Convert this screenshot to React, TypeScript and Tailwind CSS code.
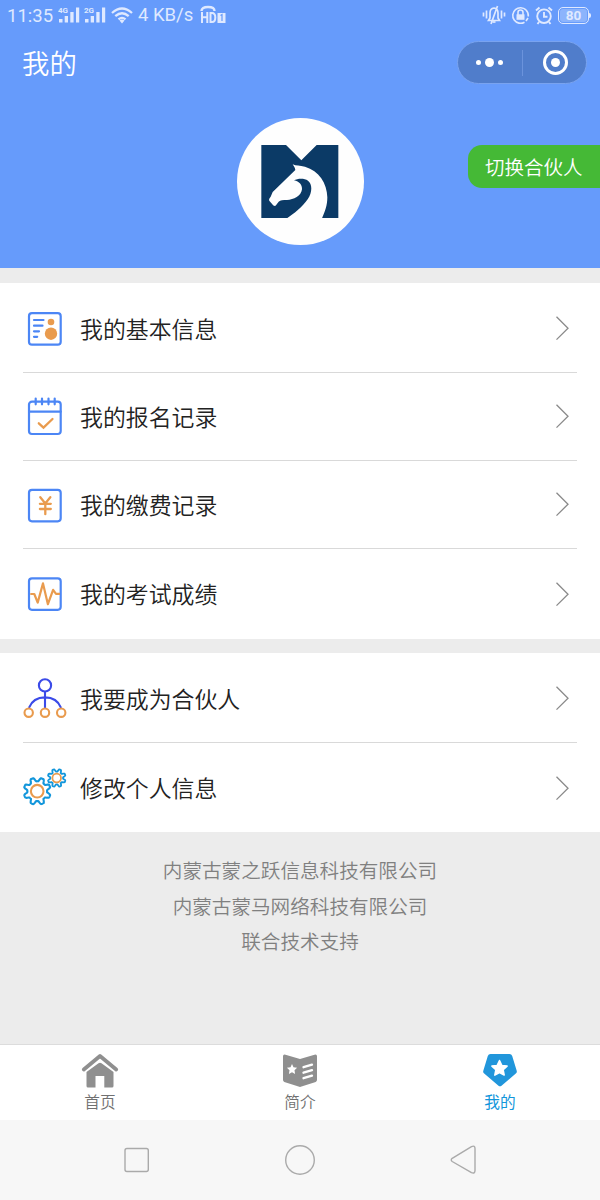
import React from 'react';

const BLUE = '#4c86f5';
const ORANGE = '#e99b4e';
const CYAN = '#1296db';

function gearPath(cx: number, cy: number, inner: number, outer: number, teeth: number, turn: number) {
  const points: string[] = [];
  const steps = teeth * 16;
  for (let i = 0; i < steps; i++) {
    const a = (i / steps) * Math.PI * 2;
    const wave = Math.max(-1, Math.min(1, Math.cos(a * teeth) * 1.7));
    const r = (inner + outer) / 2 + ((outer - inner) / 2) * wave;
    points.push(`${(cx + r * Math.cos(a + turn)).toFixed(2)} ${(cy + r * Math.sin(a + turn)).toFixed(2)}`);
  }
  return `M${points.join('L')}Z`;
}

function InfoIcon() {
  return (
    <svg className="w-11 h-11 shrink-0" viewBox="0 0 44 44" fill="none" stroke={BLUE} strokeWidth="2.2" strokeLinecap="round">
      <rect x="6" y="7.2" width="31.7" height="31.5" rx="3" />
      <path d="M11 14h9.5M11 19.7h8.5M11 25.3h5M11 30.8h3.2" />
      <circle cx="28" cy="16" r="3.3" fill={ORANGE} stroke="none" />
      <circle cx="28" cy="27.7" r="6.2" fill={ORANGE} stroke="none" />
    </svg>
  );
}

function CalendarIcon() {
  return (
    <svg className="w-11 h-11 shrink-0" viewBox="0 0 44 44" fill="none" stroke={BLUE} strokeWidth="2.2" strokeLinecap="round">
      <rect x="6" y="7.6" width="31.7" height="32.4" rx="3" />
      <path d="M6 17.7h31.7M12.7 4.6v5.7M19 4.6v5.7M25.5 4.6v5.7M31.7 4.6v5.7" />
      <path d="M15.8 29.3l4.7 4.3 9-8.6" stroke={ORANGE} strokeWidth="2.3" />
    </svg>
  );
}

function PayIcon() {
  return (
    <svg className="w-11 h-11 shrink-0" viewBox="0 0 44 44" fill="none" stroke={BLUE} strokeWidth="2.2" strokeLinecap="round">
      <rect x="6" y="7.8" width="31.7" height="31.5" rx="3" />
      <path d="M17.3 15.2l5 6.3 5-6.3M16.9 21.8h10.9M16.9 27h10.9M22.3 21.8v10.4" stroke={ORANGE} strokeWidth="2.3" />
    </svg>
  );
}

function ScoreIcon() {
  return (
    <svg className="w-11 h-11 shrink-0" viewBox="0 0 44 44" fill="none" stroke={BLUE} strokeWidth="2.2" strokeLinejoin="round">
      <rect x="6" y="6.3" width="31.7" height="31.5" rx="3" />
      <path d="M7.3 22h4l3.4 8.6L20 11.4l4.9 20.8 5.2-14.4 2.9 4h4" stroke={ORANGE} />
    </svg>
  );
}

function PartnerIcon() {
  return (
    <svg className="w-11 h-11 shrink-0" viewBox="0 0 44 44" fill="none" stroke="#3b4be8" strokeWidth="2.1">
      <circle cx="22" cy="9.4" r="6.1" />
      <path d="M22 15.6v16.6M5.9 31.8C8.5 25.5 14 21.4 22 21.4s13.5 4.1 16.1 10.4" />
      <g stroke={ORANGE}>
        <circle cx="5.7" cy="36.7" r="4.2" />
        <circle cx="22" cy="36.7" r="4.2" />
        <circle cx="38.2" cy="36.7" r="4.2" />
      </g>
    </svg>
  );
}

function GearsIcon() {
  return (
    <svg className="w-11 h-11 shrink-0 overflow-visible" viewBox="0 0 44 44" fill="none" stroke={CYAN} strokeWidth="2.1" strokeLinejoin="round">
      <path d={gearPath(14.2, 25.2, 9.9, 13.5, 8, 0.39)} />
      <circle cx="14.2" cy="25.2" r="6.3" stroke={ORANGE} />
      <path d={gearPath(33.7, 12, 6.4, 9, 8, 0.39)} strokeWidth="1.8" />
      <circle cx="33.7" cy="12" r="4.3" stroke={ORANGE} strokeWidth="1.8" />
    </svg>
  );
}

function Logo() {
  return (
    <svg className="w-[127px] h-[127px]" viewBox="36 24 381 381">
      <circle cx="226.5" cy="214.5" r="190.5" fill="#fefefe" />
      <path fill="#0b3a66" d="M109 105H183L229 151L275 105H340V324H109Z" />
      <path
        fill="#fefefe"
        d="M203 163C213 168 224 166 240 170C282 182 306 219 307 262C307 286 300 305 291 325H186C205 313 233 290 248 268C263 246 262 222 249 212C238 204 218 205 207 211C223 214 232 225 231 238C229 258 206 269 186 270C174 270 166 270 161 275L153 286C150 290 145 287 142 283L134 274C130 269 133 265 137 260L143 246L211 180C210 173 207 169 203 163Z"
      />
    </svg>
  );
}

function Signal({ label }: { label: string }) {
  return (
    <svg className="w-[22px] h-[18px]" viewBox="0 0 22 18" fill="currentColor">
      <text x="0" y="6.6" fontSize="8" fontWeight="700" fontFamily="Roboto, sans-serif">{label}</text>
      <path d="M1 13h3.5v3.5H1zM6.7 10h3.3v6.5H6.7zM12.3 6h3.3v10.5h-3.3zM18 1.5h3.2v15h-3.2z" />
    </svg>
  );
}

function StatusBar() {
  return (
    <div className="flex items-center h-[30px] text-[#dfe9ff] font-[Roboto,sans-serif]">
      <span className="ml-[7px] w-[51px] pt-[3px] text-[18.5px]">11:35</span>
      <Signal label="4G" />
      <span className="w-1" />
      <Signal label="2G" />
      <svg className="ml-[5px] w-[22px] h-[17px]" viewBox="0 0 22 17" fill="none" stroke="currentColor" strokeWidth="2.3">
        <path d="M1 6Q11-3 21 6M4.3 9.2Q11 3.2 17.7 9.2M7.5 12.4Q11 9.3 14.5 12.4" />
        <path d="M8.5 13.5Q11 11.5 13.5 13.5L11 16.5Z" fill="currentColor" stroke="none" />
      </svg>
      <span className="ml-[5px] w-[62px] pt-[2px] text-[18.5px] whitespace-nowrap">4 KB/s</span>
      <svg className="w-[28px] h-[20px]" viewBox="0 0 28 20" fill="none" stroke="currentColor">
        <path d="M1.5 6Q1.5 2 8 2T14.500 6" strokeWidth="2.4" />
        <path d="M2 7v11M7.300 7v11M2 12.300h5.300M10.500 8v9h1.500q3.300 0 3.300-4.500T12 8z" strokeWidth="2" />
        <path d="M17.500 8h8v10h-8z" fill="currentColor" stroke="none" />
        <path d="M20.500 10.500l1.500-1v6.500" stroke="#669bfb" strokeWidth="1.2" />
      </svg>
      <div className="ml-auto mr-[9px] flex items-center">
        <svg className="mr-px w-[24px] h-[20px]" viewBox="0 0 24 20" fill="none" stroke="currentColor" strokeWidth="1.7">
          <path d="M1.5 7.5v4M4.5 5.5v8M19.5 5.5v8M22.5 7.5v4" />
          <path d="M6.5 15.5h11L16 13V8q0-4.5-4-5-4 .5-4 5v5zM9 19L15.5 1" />
          <path d="M10.5 17h3" />
        </svg>
        <svg className="ml-[4px] w-[19px] h-[19px]" viewBox="0 0 19 19" fill="none" stroke="currentColor" strokeWidth="1.6">
          <path d="M13.5 16.2a7.800 7.800 0 1 1 1.500-12.300M17.300 10.500A8 8 0 0 0 15 4M15 15l2-3" />
          <path d="M7 9V6.5a2.5 2.5 0 0 1 5 0V9" />
          <rect x="5.5" y="8.3" width="8" height="5.5" fill="currentColor" stroke="none" />
        </svg>
        <svg className="ml-[5px] w-[18px] h-[19px]" viewBox="0 0 18 19" fill="none" stroke="currentColor" strokeWidth="1.9">
          <circle cx="9" cy="10.2" r="6.8" />
          <path d="M9 6v4.7h3.5M1 4.5L4.5 1.5M17 4.5L13.5 1.5M4 16l-1.5 2M14 16l1.5 2" />
        </svg>
        <div className="ml-[5px] w-[31px] h-[17px] border-[1.5px] border-current rounded-[5px] p-px">
          <div className="h-full rounded-[3px] bg-white/25 text-center text-[13.5px] leading-[13px] font-bold">80</div>
        </div>
        <span className="w-[2px] h-[5px] bg-current rounded-r" />
      </div>
    </div>
  );
}

function Header() {
  return (
    <header className="relative h-[268px] bg-[#669bfb] flex flex-col">
      <StatusBar />
      <div className="flex items-center justify-between h-[65px] pl-[22px] pr-[13px]">
        <h1 className="pb-px text-[27.4px] leading-10 text-white font-[350]">我的</h1>
        <div className="flex items-center w-[130px] h-[43px] rounded-full bg-[#507dcb] border border-[#79a3ef]">
          <div className="w-1/2 flex items-center justify-center gap-[4px]">
            <span className="w-[5px] h-[5px] rounded-full bg-white" />
            <span className="w-[9px] h-[9px] rounded-full bg-white" />
            <span className="w-[5px] h-[5px] rounded-full bg-white" />
          </div>
          <span className="w-px h-[26px] bg-[#6b93dc]" />
          <div className="w-1/2 flex items-center justify-center pl-[2px]">
            <div className="w-[25px] h-[25px] rounded-full border-[3px] border-white flex items-center justify-center">
              <span className="w-[9px] h-[9px] rounded-full bg-white" />
            </div>
          </div>
        </div>
      </div>
      <div className="flex justify-center pt-[23px]">
        <Logo />
      </div>
      <button className="absolute right-0 top-[145px] w-[132px] h-[43px] pl-[17px] rounded-l-[14px] bg-[#45b936] text-left text-white text-[19.5px] leading-[43px] font-[350]">
        切换合伙人
      </button>
    </header>
  );
}

function Row({ icon, title, last }: { icon: React.ReactNode; title: string; last?: boolean }) {
  return (
    <div className="px-[23px]">
      <div className={`flex items-center ${last ? 'h-[89px]' : 'h-[88px] pb-px border-b border-[#d9d9d9]'}`}>
        {icon}
        <p className="ml-[13px] pb-px flex-1 text-[22.9px] leading-8 text-[#222] font-[350]">{title}</p>
        <svg className="mr-[7px] w-[15px] h-[26px]" viewBox="0 0 15 26" fill="none" stroke="#8a8a8a" strokeWidth="1.3">
          <path d="M1.5 1.8L13 13.2L1.5 24.6" />
        </svg>
      </div>
    </div>
  );
}

function TabBar() {
  return (
    <nav className="flex h-[76px] border-t border-[#dcdcdc] bg-white text-[15.7px] leading-5 text-[#707070] font-[350]">
      <div className="w-1/3 flex flex-col items-center pt-[8px]">
        <svg className="w-[38px] h-[36px]" viewBox="0 0 38 36" fill="#8f8f8f">
          <path d="M2.8 16.5L19 3L35.2 16.5" fill="none" stroke="#8f8f8f" strokeWidth="3.8" strokeLinecap="round" strokeLinejoin="round" />
          <path d="M5.5 19L17.5 10.2Q19 9.1 20.5 10.2L32.5 19V33Q32.5 34.5 31 34.5H23.3V23H14.5V34.5H7Q5.5 34.5 5.5 33Z" />
        </svg>
        <span className="mt-[3px]">首页</span>
      </div>
      <div className="w-1/3 flex flex-col items-center pt-[8px]">
        <svg className="w-[38px] h-[36px]" viewBox="0 0 38 36" fill="#8f8f8f">
          <path d="M2 3.3Q2 1 4.5 1.7L19 6L33.5 1.7Q36 1 36 3.3V27Q36 28.3 34.7 28.9L20.5 33.6Q19 34.2 17.5 33.6L3.3 28.9Q2 28.3 2 27Z" />
          <path fill="#fff" d="M11 11l1.5 3.3 3.6.5-2.6 2.5.6 3.6-3.1-1.7-3.1 1.7.6-3.6-2.6-2.5 3.6-.5z" />
          <path d="M22.5 14.2L31 11.6M22.5 19.7L31 17.1M22.5 25.2L31 22.6" stroke="#fff" strokeWidth="2.3" strokeLinecap="round" />
        </svg>
        <span className="mt-[3px]">简介</span>
      </div>
      <div className="w-1/3 flex flex-col items-center pt-[8px] text-[#1296db] font-normal">
        <svg className="w-[38px] h-[36px]" viewBox="0 0 38 36" fill="#2196db">
          <path d="M9.5 1H28.5Q30.5 1 31.2 3L35.7 17.8Q36.2 19.5 34.8 20.6L20.5 32.7Q19 33.8 17.5 32.7L3.2 20.6Q1.8 19.5 2.3 17.8L6.8 3Q7.5 1 9.5 1Z" />
          <path fill="#fff" stroke="#fff" strokeWidth="1.5" strokeLinejoin="round" d="M18.5 7.5l2.3 4.9 5.3.7-3.9 3.7 1 5.3-4.7-2.6-4.7 2.6 1-5.3-3.9-3.7 5.3-.7z" />
        </svg>
        <span className="mt-[3px]">我的</span>
      </div>
    </nav>
  );
}

export default function App() {
  const records = [
    { title: '我的基本信息', icon: <InfoIcon /> },
    { title: '我的报名记录', icon: <CalendarIcon /> },
    { title: '我的缴费记录', icon: <PayIcon /> },
    { title: '我的考试成绩', icon: <ScoreIcon /> },
  ];
  const settings = [
    { title: '我要成为合伙人', icon: <PartnerIcon /> },
    { title: '修改个人信息', icon: <GearsIcon /> },
  ];
  return (
    <div className="w-[600px] h-[1200px] flex flex-col overflow-hidden bg-[#ececec] font-['Noto_Sans_CJK_SC',sans-serif]">
      <Header />
      <div className="mt-[15px] pt-[2px] pb-px bg-white">
        {records.map((item, i) => (
          <Row key={item.title} icon={item.icon} title={item.title} last={i === records.length - 1} />
        ))}
      </div>
      <div className="mt-[14px] pt-[2px] bg-white">
        {settings.map((item, i) => (
          <Row key={item.title} icon={item.icon} title={item.title} last={i === settings.length - 1} />
        ))}
      </div>
      <div className="flex-1 pt-[20px] text-center text-[19.6px] leading-[35.5px] text-[#808080] font-[350]">
        <p>内蒙古蒙之跃信息科技有限公司</p>
        <p>内蒙古蒙马网络科技有限公司</p>
        <p>联合技术支持</p>
      </div>
      <TabBar />
      <div className="h-[80px] bg-[#f7f7f7]">
        <svg className="w-full h-full" viewBox="0 0 600 80" fill="none" stroke="#aaa" strokeWidth="1.4" strokeLinejoin="round">
          <rect x="125" y="28.5" width="23.3" height="23" rx="2" />
          <circle cx="300" cy="40" r="14.3" />
          <path d="M452.2 38.3L471.5 26.6Q475 25 475 28.5V50.5Q475 54 471.5 52.6L452.2 41.5Q450.3 39.9 452.2 38.3Z" />
        </svg>
      </div>
    </div>
  );
}
